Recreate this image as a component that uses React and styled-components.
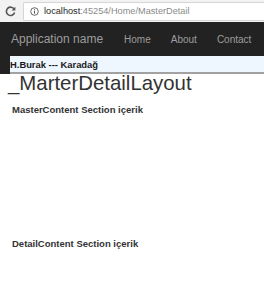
import React from "react";
import styled, { createGlobalStyle } from "styled-components";

const GlobalStyle = createGlobalStyle`
  html, body {
    margin: 0;
    padding: 0;
    background: #ffffff;
    font-family: "Liberation Sans", Arial, sans-serif;
  }
  body {
    width: 264px;
    height: 300px;
    overflow: hidden;
  }
`;

const BrowserBar = styled.div`
  height: 22px;
  background: #f2f2f2;
  display: flex;
  align-items: center;
  padding-left: 5px;
  box-sizing: border-box;
`;

const ReloadButton = styled.div`
  width: 11px;
  height: 11px;
  margin-right: 7px;
  display: flex;
  align-items: center;
  justify-content: center;
`;

const AddressBox = styled.div`
  flex: 1;
  height: 19px;
  background: #ffffff;
  border: 1px solid #d6d6d6;
  border-right: none;
  border-radius: 2px 0 0 2px;
  box-sizing: border-box;
  display: flex;
  align-items: center;
  padding-left: 6px;
  gap: 5px;
`;

const Url = styled.span`
  font-size: 9.2px;
  color: #8a8a8a;
  white-space: nowrap;
`;

const Host = styled.span`
  color: #262626;
`;

const Navbar = styled.nav`
  height: 34px;
  background: #222222;
  display: flex;
  align-items: center;
  padding-left: 11px;
  box-sizing: border-box;
`;

const Brand = styled.span`
  font-size: 12px;
  color: #9d9d9d;
  margin-right: 21px;
  white-space: nowrap;
`;

const NavLinks = styled.div`
  display: flex;
  gap: 20px;
  padding-top: 1px;
`;

const NavLink = styled.span`
  font-size: 10px;
  color: #9d9d9d;
  white-space: nowrap;
`;

const UserStrip = styled.div`
  background: #222222;
  padding-left: 10px;
`;

const UserBox = styled.div`
  height: 16px;
  background: #eef6ff;
  border-bottom: 2px solid #a2a2a2;
  display: flex;
  align-items: center;
  font-size: 9.4px;
  font-weight: bold;
  color: #1a1a1a;
  white-space: nowrap;
`;

const Main = styled.main`
  padding-left: 8px;
`;

const Title = styled.h2`
  margin: 0;
  font-size: 20.4px;
  line-height: 19px;
  font-weight: normal;
  color: #333333;
  padding-top: 0px;
  white-space: nowrap;
`;

const SectionLabel = styled.div`
  font-size: 9.5px;
  font-weight: bold;
  color: #333333;
  line-height: 11px;
  padding-left: 4px;
  margin-top: ${(p) => p.$top}px;
  white-space: nowrap;
`;

const ReloadIcon = () => (
  <svg width="11" height="11" viewBox="0 0 11 11">
    <path
      d="M9.2 3.2 A4.2 4.2 0 1 0 9.6 6.6"
      fill="none"
      stroke="#555"
      strokeWidth="1.6"
    />
    <path d="M10.4 0.8 L10.4 4.6 L6.6 4.6 Z" fill="#555" />
  </svg>
);

const InfoIcon = () => (
  <svg width="9" height="9" viewBox="0 0 9 9">
    <circle cx="4.5" cy="4.5" r="3.8" fill="none" stroke="#555" strokeWidth="0.9" />
    <rect x="4" y="3.8" width="1" height="2.8" fill="#555" />
    <rect x="4" y="2.2" width="1" height="1" fill="#555" />
  </svg>
);

export default function App() {
  return (
    <>
      <GlobalStyle />
      <BrowserBar>
        <ReloadButton>
          <ReloadIcon />
        </ReloadButton>
        <AddressBox>
          <InfoIcon />
          <Url>
            <Host>localhost</Host>:45254/Home/MasterDetail
          </Url>
        </AddressBox>
      </BrowserBar>
      <Navbar>
        <Brand>Application name</Brand>
        <NavLinks>
          <NavLink>Home</NavLink>
          <NavLink>About</NavLink>
          <NavLink>Contact</NavLink>
        </NavLinks>
      </Navbar>
      <UserStrip>
        <UserBox>H.Burak --- Karadağ</UserBox>
      </UserStrip>
      <Main>
        <Title>_MarterDetailLayout</Title>
        <SectionLabel $top={11}>MasterContent Section içerik</SectionLabel>
        <SectionLabel $top={123}>DetailContent Section içerik</SectionLabel>
      </Main>
    </>
  );
}
